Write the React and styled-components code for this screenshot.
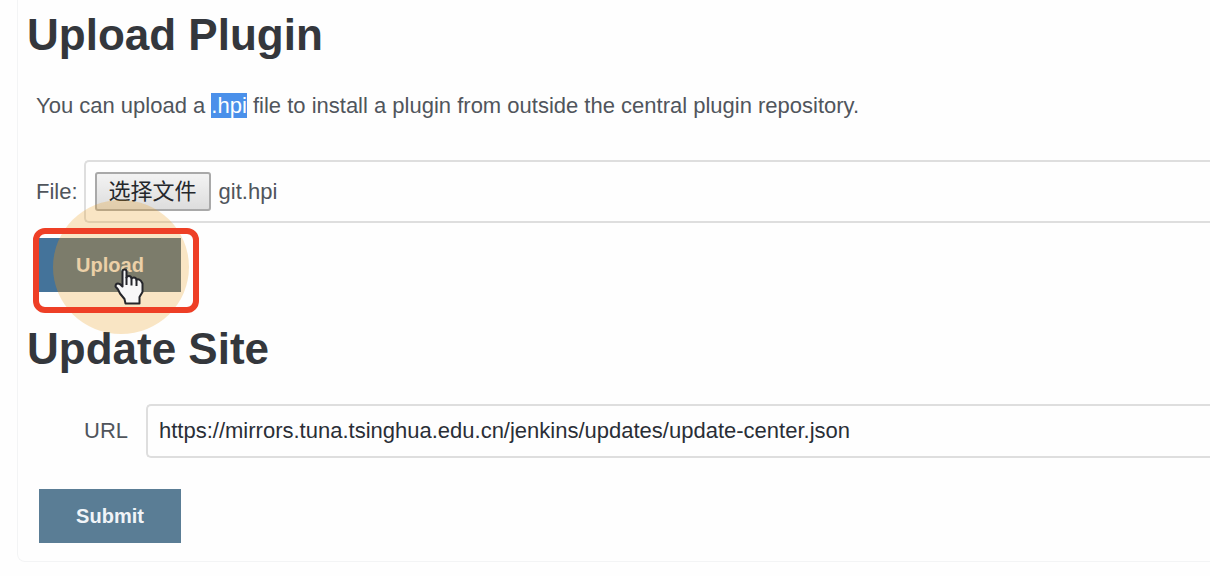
import React, { useRef, useState } from "react";
import styled, { createGlobalStyle } from "styled-components";

const GlobalStyle = createGlobalStyle`
  *, *::before, *::after { box-sizing: border-box; }
  body {
    margin: 0;
    background: #fefefe;
    color: #50555c;
    font-family: "Liberation Sans", Arial, "Noto Sans CJK SC", sans-serif;
    font-size: 22px;
    line-height: 28px;
  }
`;

const Panel = styled.main`
  margin: 0 0 14px 17px;
  padding: 10px 0 18px 9px;
  border: 1px solid #f3f4f5;
  border-width: 0 0 1px 1px;
  border-bottom-left-radius: 8px;
  overflow: hidden;
`;

const Heading = styled.h1`
  margin: 0;
  color: #34373c;
  font-size: 44px;
  font-weight: 700;
  line-height: 50px;
`;

const Intro = styled.p`
  margin: 32px 0 40px 9px;
`;

const Marked = styled.mark`
  padding: 0;
  background: #4a90ea;
  color: #fff;
`;

const SiteForm = styled.form`
  margin-top: 30px;
`;

const Field = styled.div`
  display: flex;
  align-items: center;
  gap: ${(p) => p.$gap}px;
  padding-left: ${(p) => p.$indent}px;
`;

const fieldFrame = `
  flex: 1;
  min-width: 0;
  border: 2px solid #dedede;
  border-right: 0;
  border-radius: 5px 0 0 5px;
  background: transparent;
`;

const FileBox = styled.div`
  ${fieldFrame}
  display: flex;
  align-items: center;
  gap: 8px;
  padding: 10px 9px;
`;

const HiddenFile = styled.input`
  position: absolute;
  width: 1px;
  height: 1px;
  opacity: 0;
  pointer-events: none;
`;

const ChooseButton = styled.button`
  height: 39px;
  padding: 0 12px;
  border: 2px solid #a9a9a9;
  border-radius: 3px;
  background: linear-gradient(#f3f3f3, #dddddd);
  color: #24272b;
  font: inherit;
`;

const TextInput = styled.input`
  ${fieldFrame}
  height: 54px;
  padding: 0 11px;
  color: #2a2e36;
  font: inherit;
  outline: 0;
`;

const ActionButton = styled.button`
  display: block;
  width: 142px;
  height: 54px;
  padding: 0;
  border: 0;
  background: ${(p) => (p.$active ? "#44739a" : "#5a7d95")};
  color: ${(p) => (p.$active ? "#ffffff" : "#f0f4f8")};
  font: inherit;
  font-size: 20px;
  font-weight: 700;
`;

const Actions = styled.div`
  position: relative;
  width: 142px;
  margin: ${(p) => p.$margin};
`;

const Spotlight = styled.span`
  position: absolute;
  left: 14px;
  top: -38px;
  width: 136px;
  height: 134px;
  border-radius: 50%;
  background: rgba(237, 158, 30, 0.26);
  pointer-events: none;
`;

const ButtonShade = styled.span`
  position: absolute;
  inset: 0;
  overflow: hidden;
  pointer-events: none;

  &::after {
    content: "";
    position: absolute;
    left: 14px;
    top: -38px;
    width: 136px;
    height: 134px;
    border-radius: 50%;
    background: rgba(182, 121, 52, 0.2);
  }
`;

const Outline = styled.span`
  position: absolute;
  inset: -10px -18px -21px -6px;
  border: 6px solid #ee3f26;
  border-radius: 12px;
  pointer-events: none;
`;

const Pointer = styled.svg`
  position: absolute;
  left: 75px;
  top: 30px;
  pointer-events: none;
`;

function HandPointer() {
  return (
    <Pointer width="31" height="37" viewBox="0 0 31 37" aria-hidden="true">
      <path
        d="M8.500 3.500Q8.500 1.500 10.500 1.500T12.500 3.500V9.500Q13 8 15 8T17.500 10.500Q18 9.500 20 9.500T22.500 12Q23 11 25 11.500T28.500 15.500V24L25.500 29V35.500H11.500L10.500 31L6 25.500L4 21.500L1.500 18.500Q1.500 15.500 4 15.500Q6 15.500 8.500 18.500Z"
        fill="#f8f8f8"
        stroke="#25262b"
        strokeWidth="2"
        strokeLinejoin="round"
      />
      <path d="M12.500 9V17M17.500 10.500V17.500M22.500 12V18" stroke="#25262b" strokeWidth="2" fill="none" />
    </Pointer>
  );
}

export default function App() {
  const fileRef = useRef(null);
  const [fileName, setFileName] = useState("git.hpi");
  const [url, setUrl] = useState("https://mirrors.tuna.tsinghua.edu.cn/jenkins/updates/update-center.json");

  return (
    <>
      <GlobalStyle />
      <Panel>
        <Heading>Upload Plugin</Heading>
        <Intro>
          You can upload a <Marked>.hpi</Marked> file to install a plugin from outside the central plugin repository.
        </Intro>
        <Field $indent={9} $gap={6}>
          <label htmlFor="plugin-file">File:</label>
          <FileBox>
            <HiddenFile
              ref={fileRef}
              id="plugin-file"
              type="file"
              tabIndex={-1}
              onChange={(e) => e.target.files[0] && setFileName(e.target.files[0].name)}
            />
            <ChooseButton type="button" onClick={() => fileRef.current.click()}>
              选择文件
            </ChooseButton>
            <span>{fileName}</span>
          </FileBox>
        </Field>
        <Actions $margin="15px 0 32px 12px">
          <ActionButton type="button" $active>Upload</ActionButton>
          <Spotlight />
          <ButtonShade />
          <Outline />
          <HandPointer />
        </Actions>
        <Heading>Update Site</Heading>
        <SiteForm onSubmit={(e) => e.preventDefault()}>
          <Field $indent={57} $gap={18}>
            <label htmlFor="site-url">URL</label>
            <TextInput id="site-url" type="text" value={url} onChange={(e) => setUrl(e.target.value)} />
          </Field>
          <Actions $margin="31px 0 0 12px">
            <ActionButton type="submit">Submit</ActionButton>
          </Actions>
        </SiteForm>
      </Panel>
    </>
  );
}
